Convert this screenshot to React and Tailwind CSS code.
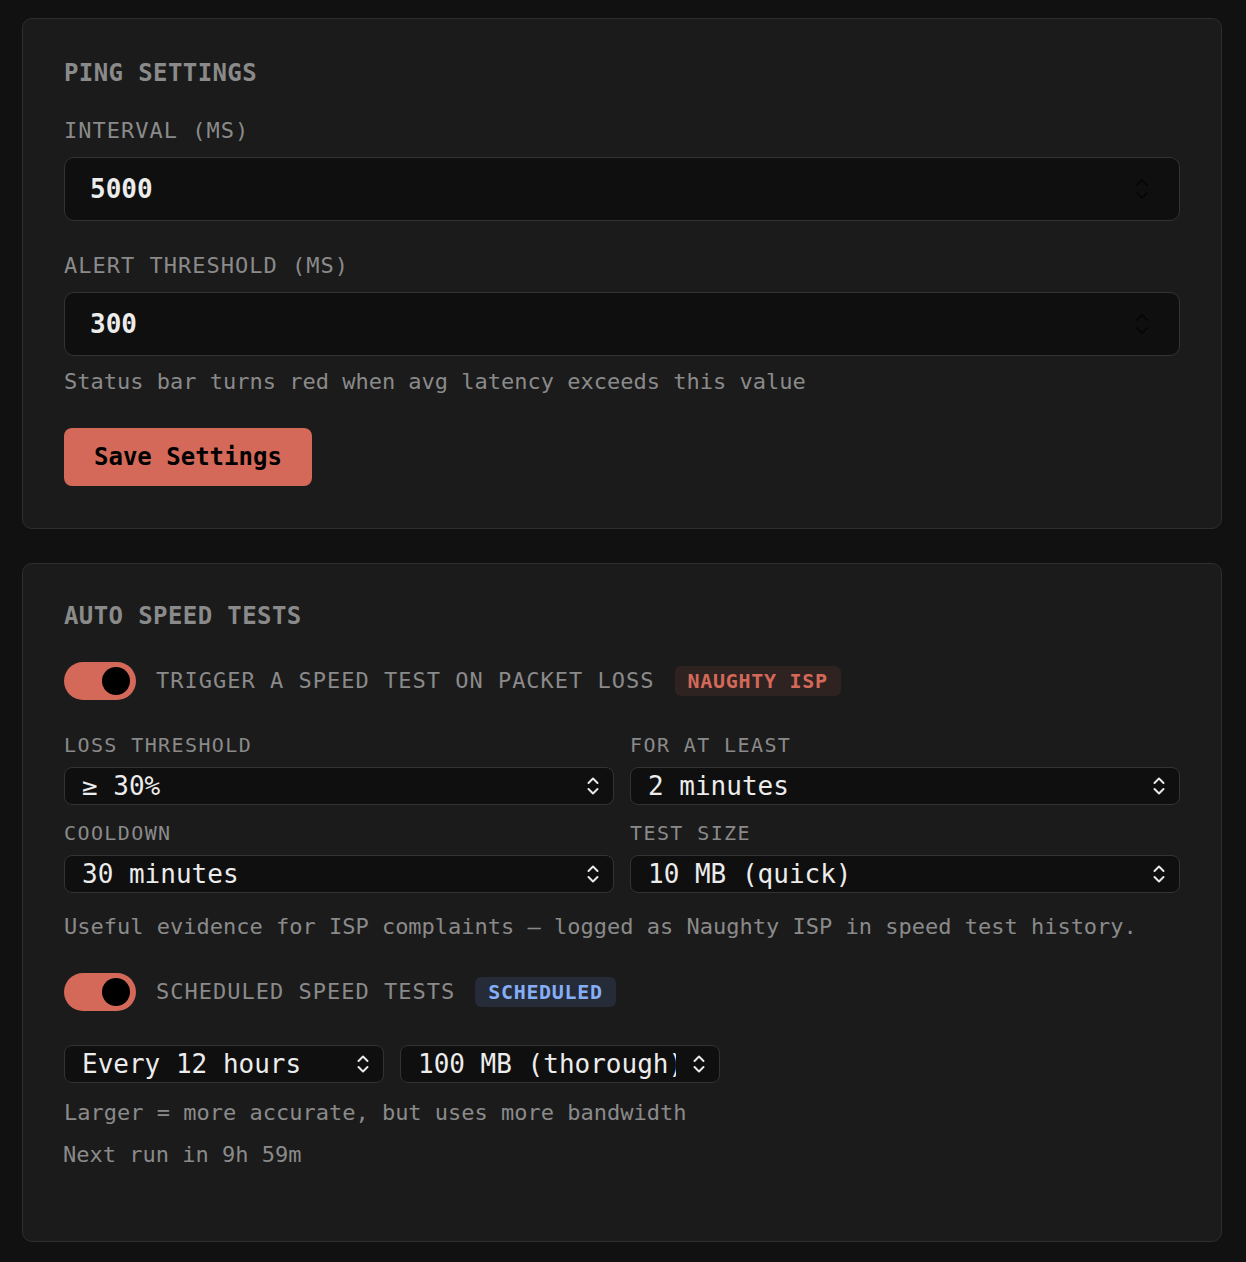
import { useState } from "react";

const mono = { fontFamily: '"DejaVu Sans Mono", "Liberation Mono", monospace' };

function SectionTitle({ children }) {
  return (
    <h3 className="text-[24px] leading-[26px] font-bold tracking-[0.4px] text-[#8a8a8a]">
      {children}
    </h3>
  );
}

function Label({ children, className = "" }) {
  return (
    <div className={`text-[22px] leading-[26px] tracking-[1px] text-[#8a8a8a] ${className}`}>
      {children}
    </div>
  );
}

function FieldLabel({ children }) {
  return <div className="text-[20px] leading-[26px] tracking-[1.4px] text-[#8a8a8a]">{children}</div>;
}

function Hint({ children, className = "" }) {
  return <p className={`text-[22px] leading-[26px] text-[#8a8a8a] ${className}`}>{children}</p>;
}

function Spinner() {
  return (
    <svg width="14" height="26" viewBox="0 0 14 26" fill="none" stroke="#050505" strokeWidth="1.6" strokeLinecap="round" strokeLinejoin="round">
      <path d="M2 9 L7 4 L12 9" />
      <path d="M2 17 L7 22 L12 17" />
    </svg>
  );
}

function UpDown() {
  return (
    <svg width="14" height="22" viewBox="0 0 14 22" fill="none" stroke="#e8e8e8" strokeWidth="2" strokeLinecap="round" strokeLinejoin="round">
      <path d="M2.5 8 L7 3.5 L11.5 8" />
      <path d="M2.5 14 L7 18.5 L11.5 14" />
    </svg>
  );
}

function NumberField({ value }) {
  return (
    <div className="flex h-[64px] items-center justify-between rounded-[10px] border border-[#333333] bg-[#0f0f0f] pl-[25px] pr-[30px]">
      <span className="text-[26px] font-semibold text-[#ececec]">{value}</span>
      <Spinner />
    </div>
  );
}

function Select({ value, className = "" }) {
  return (
    <div className={`flex h-[38px] items-center rounded-[8px] border border-[#333333] bg-[#0f0f0f] pl-[17px] pr-[13px] ${className}`}>
      <span className="flex-1 overflow-hidden whitespace-nowrap text-[26px] leading-[30px] text-[#ececec]">{value}</span>
      <span className="ml-[16px] flex-none">
        <UpDown />
      </span>
    </div>
  );
}

function Toggle({ on, onChange }) {
  return (
    <button
      onClick={() => onChange(!on)}
      className="flex h-[38px] w-[72px] flex-none items-center rounded-full bg-[#d4695a] px-[6px]"
    >
      <span className={`h-[28px] w-[28px] rounded-full bg-black ${on ? "ml-auto" : ""}`} />
    </button>
  );
}

function Badge({ children, tone }) {
  const tones = {
    red: "bg-[#2f2321] text-[#d4695a]",
    blue: "bg-[#252b37] text-[#86aef6]",
  };
  return (
    <span className={`rounded-[6px] px-[13px] py-[3px] text-[20px] leading-[24px] font-bold tracking-[0.7px] ${tones[tone]}`}>
      {children}
    </span>
  );
}

export default function App() {
  const [lossTrigger, setLossTrigger] = useState(true);
  const [scheduled, setScheduled] = useState(true);

  return (
    <div className="min-h-screen bg-[#111111] pb-[21px] pl-[22px] pr-[24px] pt-[18px]" style={mono}>
      <section className="rounded-[10px] border border-[#2e2e2e] bg-[#1b1b1b] px-[41px] pb-[42px] pt-[41px]">
        <SectionTitle>PING SETTINGS</SectionTitle>

        <Label className="mt-[32px]">INTERVAL (MS)</Label>
        <div className="mt-[13px]">
          <NumberField value="5000" />
        </div>

        <Label className="mt-[32px]">ALERT THRESHOLD (MS)</Label>
        <div className="mt-[13px]">
          <NumberField value="300" />
        </div>
        <Hint className="mt-[13px]">Status bar turns red when avg latency exceeds this value</Hint>

        <button className="mt-[33px] h-[58px] rounded-[8px] bg-[#d4695a] px-[30px] text-[24px] font-bold text-black">
          Save Settings
        </button>
      </section>

      <section className="mt-[34px] rounded-[10px] border border-[#2e2e2e] bg-[#1b1b1b] px-[41px] pb-[73px] pt-[39px]">
        <SectionTitle>AUTO SPEED TESTS</SectionTitle>

        <div className="mt-[33px] flex items-center gap-5">
          <Toggle on={lossTrigger} onChange={setLossTrigger} />
          <Label>TRIGGER A SPEED TEST ON PACKET LOSS</Label>
          <Badge tone="red">NAUGHTY ISP</Badge>
        </div>

        <div className="mt-[32px] grid grid-cols-2 gap-x-4 gap-y-[15px]">
          <div className="flex flex-col gap-[9px]">
            <FieldLabel>LOSS THRESHOLD</FieldLabel>
            <Select value="≥ 30%" />
          </div>
          <div className="flex flex-col gap-[9px]">
            <FieldLabel>FOR AT LEAST</FieldLabel>
            <Select value="2 minutes" />
          </div>
          <div className="flex flex-col gap-[9px]">
            <FieldLabel>COOLDOWN</FieldLabel>
            <Select value="30 minutes" />
          </div>
          <div className="flex flex-col gap-[9px]">
            <FieldLabel>TEST SIZE</FieldLabel>
            <Select value="10 MB (quick)" />
          </div>
        </div>
        <Hint className="mt-[21px]">
          Useful evidence for ISP complaints — logged as Naughty ISP in speed test history.
        </Hint>

        <div className="mt-[33px] flex items-center gap-5">
          <Toggle on={scheduled} onChange={setScheduled} />
          <Label>SCHEDULED SPEED TESTS</Label>
          <Badge tone="blue">SCHEDULED</Badge>
        </div>

        <div className="mt-[34px] flex gap-[16px]">
          <Select className="w-[320px]" value="Every 12 hours" />
          <Select className="w-[320px]" value="100 MB (thorough)" />
        </div>
        <Hint className="mt-[17px]">Larger = more accurate, but uses more bandwidth</Hint>
        <Hint className="mt-[16px] -ml-px">Next run in 9h 59m</Hint>
      </section>
    </div>
  );
}
